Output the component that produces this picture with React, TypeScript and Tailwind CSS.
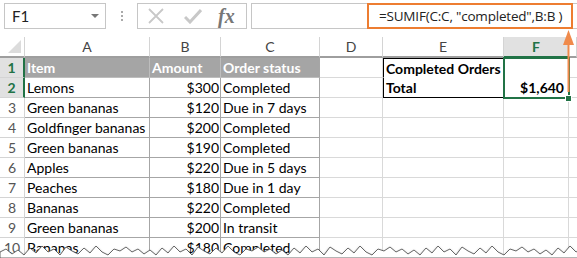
import React from "react"

const rows: string[][] = [
  ["Item", "Amount", "Order status"],
  ["Lemons", "$300", "Completed"],
  ["Green bananas", "$120", "Due in 7 days"],
  ["Goldfinger bananas", "$200", "Completed"],
  ["Green bananas", "$190", "Completed"],
  ["Apples", "$220", "Due in 5 days"],
  ["Peaches", "$180", "Due in 1 day"],
  ["Bananas", "$220", "Completed"],
  ["Green bananas", "$200", "In transit"],
  ["Bananas", "$180", "Completed"],
]

const cols = ["A", "B", "C", "D", "E", "F", ""]

// jagged torn edge along the bottom
const tornPoints = (() => {
  const ys = [252, 249, 254, 250, 255, 248, 253, 246, 252, 249, 255, 247, 251, 254, 248, 253, 246, 252, 255, 249, 251, 247]
  const pts: string[] = []
  for (let x = 0, i = 0; x <= 585; x += 6, i++) pts.push(`${x},${ys[i % ys.length] - 240}`)
  return pts
})()

function Toolbar() {
  return (
    <div className="flex items-start h-[37px] pt-[3px] pl-[4px]">
      <div className="w-[102px] h-[26px] border border-[#c6c6c6] flex items-center justify-between pl-[7px] pr-[6px] text-[15px] text-[#222]">
        <span>F1</span>
        <span className="w-0 h-0 border-l-[4px] border-r-[4px] border-t-[4px] border-l-transparent border-r-transparent border-t-[#777]" />
      </div>
      <div className="w-[31px] h-[26px] flex flex-col items-center justify-center gap-[2px]">
        <span className="w-[2px] h-[2px] bg-[#aaa]" />
        <span className="w-[2px] h-[2px] bg-[#aaa]" />
        <span className="w-[2px] h-[2px] bg-[#aaa]" />
      </div>
      <div className="w-[110px] h-[26px] border border-[#c6c6c6] flex items-center">
        <svg width="18" height="18" viewBox="0 0 18 18" className="ml-[9px]">
          <path d="M2 2 L16 16 M16 2 L2 16" stroke="#c8c8c8" strokeWidth="1.8" fill="none" />
        </svg>
        <svg width="18" height="16" viewBox="0 0 18 16" className="ml-[19px]">
          <path d="M1 9 L6 14 L17 2" stroke="#c8c8c8" strokeWidth="3" fill="none" />
        </svg>
        <span
          className="ml-[16px] text-[20px] italic font-bold text-[#777] leading-none"
          style={{ fontFamily: '"Liberation Serif", serif' }}
        >
          fx
        </span>
      </div>
      <div className="ml-[4px] flex-1 h-[26px] border border-[#c6c6c6] border-r-0 flex items-center">
        <div
          className="ml-[115px] h-[26px] w-[206px] border-2 border-[#ed7d31] flex items-center pl-[10px] text-[13.5px] tracking-[-0.2px] text-[#222] whitespace-nowrap"
          style={{ fontFamily: '"Open Sans", sans-serif' }}
        >
          =SUMIF(C:C, "completed",B:B )
        </div>
      </div>
    </div>
  )
}

function Cell({ children, className = "" }: { children?: React.ReactNode; className?: string }) {
  return <div className={`h-full flex items-center overflow-hidden whitespace-nowrap ${className}`}>{children}</div>
}

export default function App() {
  return (
    <div className="w-[577px] h-[258px] bg-white relative overflow-hidden" style={{ fontFamily: "Lato, sans-serif" }}>
      <Toolbar />
      <div className="grid grid-cols-[25px_125px_71px_99px_63px_121px_65px_1fr] grid-rows-[21px_repeat(10,20px)] text-[14px]">
        {/* column headers */}
        <div className="relative border-r border-b-2 border-r-[#d4d4d4] border-b-[#9e9e9e]">
          <span
            className="absolute right-[3px] bottom-[3px] w-0 h-0"
            style={{ borderRight: "13px solid #dcdcdc", borderTop: "13px solid transparent" }}
          />
        </div>
        {cols.map((c, i) =>
          c === "F" ? (
            <Cell key={i} className="justify-center bg-[#e1e1e1] text-[#217346] font-bold border-r border-r-[#d4d4d4] border-b-2 border-b-[#217346]">
              {c}
            </Cell>
          ) : (
            <Cell key={i} className="justify-center text-[#444] border-r border-r-[#d4d4d4] border-b-2 border-b-[#9e9e9e]">
              {c}
            </Cell>
          )
        )}

        {rows.map((r, ri) => {
          const n = ri + 1
          const sel = n <= 2
          const head = ri === 0
          return (
            <React.Fragment key={ri}>
              <Cell
                className={`justify-center border-b border-b-[#d4d4d4] ${
                  sel ? "bg-[#e1e1e1] text-[#217346] font-bold border-r-2 border-r-[#217346]" : "text-[#555] border-r border-r-[#d4d4d4]"
                }`}
              >
                {n}
              </Cell>
              <Cell className={`pl-[2px] border-r border-b ${head ? "bg-[#a5a5a5] text-white font-bold border-[#bdbdbd]" : "border-[#a6a6a6]"}`}>
                {r[0]}
              </Cell>
              <Cell
                className={`border-r border-b ${head ? "bg-[#a5a5a5] text-white font-bold pl-[2px] border-[#bdbdbd]" : "justify-end pr-[1px] border-[#a6a6a6]"}`}
              >
                {r[1]}
              </Cell>
              <Cell className={`pl-[2px] border-r border-b ${head ? "bg-[#a5a5a5] text-white font-bold border-r-[#a6a6a6] border-b-[#bdbdbd]" : "border-[#a6a6a6]"}`}>
                {r[2]}
              </Cell>
              <Cell className="border-r border-b border-[#d9d9d9]" />
              <Cell
                className={`pl-[2px] font-bold ${
                  n === 1
                    ? "border-l border-t border-r border-black border-b border-b-transparent"
                    : n === 2
                    ? "border-l border-b border-r border-black"
                    : "border-r border-b border-[#d9d9d9]"
                }`}
              >
                {n === 1 ? "Completed Orders" : n === 2 ? "Total" : ""}
              </Cell>
              <Cell className={`justify-end pr-[4px] font-bold border-r border-b ${sel ? "border-transparent" : "border-[#d9d9d9]"}`}>
                {n === 2 ? "$1,640" : ""}
              </Cell>
              <Cell className="border-b border-[#d9d9d9]" />
            </React.Fragment>
          )
        })}
      </div>

      {/* selection F1:F2 */}
      <div className="absolute left-[503px] top-[57px] w-[67px] h-[42px] border-2 border-[#217346]" />
      <div className="absolute left-[565px] top-[95px] w-[7px] h-[7px] bg-[#217346] border border-white" />

      {/* orange arrow */}
      <svg className="absolute left-[560px] top-[28px]" width="17" height="66" viewBox="0 0 17 66">
        <path d="M8.5 8 L8.5 64" stroke="#f08a4b" strokeWidth="2" />
        <path d="M3 17 L8.5 2 L14 17 Z" fill="#f08a4b" />
      </svg>

      {/* torn edge */}
      <svg className="absolute left-0 top-[240px]" width="577" height="18" viewBox="0 0 577 18">
        <defs>
          <filter id="sh" x="-5%" y="-80%" width="110%" height="260%">
            <feDropShadow dx="0" dy="1.5" stdDeviation="1" floodColor="#000" floodOpacity="0.7" />
          </filter>
        </defs>
        <polygon points={`0,18 ${tornPoints.join(" ")} 585,18`} fill="#fff" stroke="#444" strokeWidth="0.8" filter="url(#sh)" />
      </svg>
    </div>
  )
}
